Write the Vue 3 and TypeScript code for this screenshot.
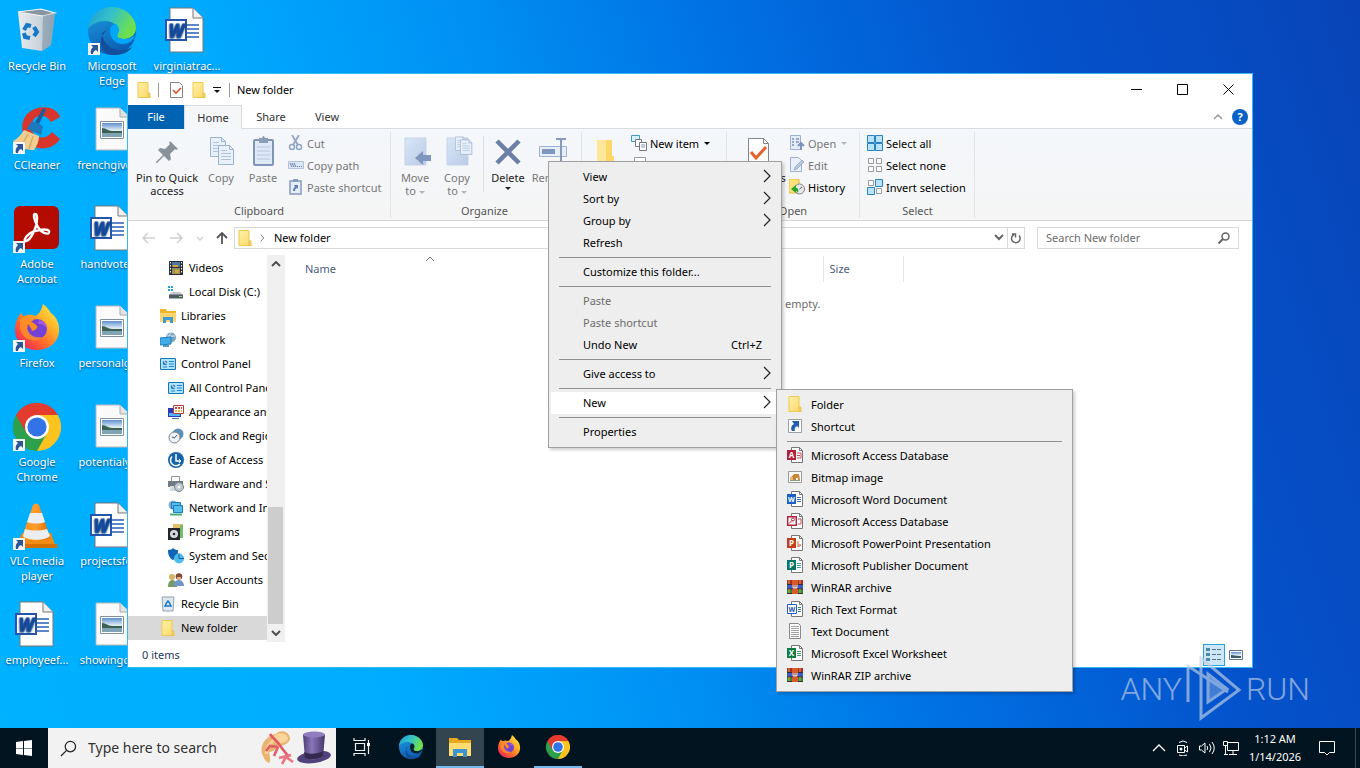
<script setup lang="ts">
interface Shortcut { label: string; icon: string; linked?: boolean }
interface TreeNode { label: string; icon: string; depth: number; selected?: boolean }
interface MenuEntry { label?: string; icon?: string; keys?: string; arrow?: boolean; off?: boolean; open?: boolean; line?: boolean }
interface SmallAction { label: string; icon: string; off?: boolean; caret?: boolean }

const shortcuts: Shortcut[] = [
  { label: 'Recycle Bin', icon: 'bin' },
  { label: 'CCleaner', icon: 'ccleaner', linked: true },
  { label: 'Adobe Acrobat', icon: 'acrobat', linked: true },
  { label: 'Firefox', icon: 'firefox', linked: true },
  { label: 'Google Chrome', icon: 'chrome', linked: true },
  { label: 'VLC media player', icon: 'vlc', linked: true },
  { label: 'employeef...', icon: 'worddoc' },
  { label: 'Microsoft Edge', icon: 'edge', linked: true },
  { label: 'frenchgivea...', icon: 'picfile' },
  { label: 'handvotes...', icon: 'worddoc' },
  { label: 'personalga...', icon: 'picfile' },
  { label: 'potentialye...', icon: 'picfile' },
  { label: 'projectsfor...', icon: 'worddoc' },
  { label: 'showingco...', icon: 'picfile' },
  { label: 'virginiatrac...', icon: 'worddoc' },
]

const tree: TreeNode[] = [
  { label: 'Videos', icon: 'videos', depth: 1 },
  { label: 'Local Disk (C:)', icon: 'disk', depth: 1 },
  { label: 'Libraries', icon: 'libraries', depth: 0 },
  { label: 'Network', icon: 'network', depth: 0 },
  { label: 'Control Panel', icon: 'cpanel', depth: 0 },
  { label: 'All Control Panel Items', icon: 'cpanel', depth: 1 },
  { label: 'Appearance and Personalization', icon: 'appearance', depth: 1 },
  { label: 'Clock and Region', icon: 'clock', depth: 1 },
  { label: 'Ease of Access', icon: 'ease', depth: 1 },
  { label: 'Hardware and Sound', icon: 'hardware', depth: 1 },
  { label: 'Network and Internet', icon: 'netinet', depth: 1 },
  { label: 'Programs', icon: 'programs', depth: 1 },
  { label: 'System and Security', icon: 'security', depth: 1 },
  { label: 'User Accounts', icon: 'users', depth: 1 },
  { label: 'Recycle Bin', icon: 'binsmall', depth: 0 },
  { label: 'New folder', icon: 'folder', depth: 0, selected: true },
]

const clipboardActions: SmallAction[] = [
  { label: 'Cut', icon: 'cut', off: true },
  { label: 'Copy path', icon: 'copypath', off: true },
  { label: 'Paste shortcut', icon: 'pasteshort', off: true },
]
const newActions: SmallAction[] = [
  { label: 'New item', icon: 'newitem', caret: true },
  { label: 'Easy access', icon: 'easyaccess', caret: true },
]
const openActions: SmallAction[] = [
  { label: 'Open', icon: 'open', off: true, caret: true },
  { label: 'Edit', icon: 'edit', off: true },
  { label: 'History', icon: 'history' },
]
const selectActions: SmallAction[] = [
  { label: 'Select all', icon: 'selall' },
  { label: 'Select none', icon: 'selnone' },
  { label: 'Invert selection', icon: 'selinv' },
]

const menu: MenuEntry[] = [
  { label: 'View', arrow: true },
  { label: 'Sort by', arrow: true },
  { label: 'Group by', arrow: true },
  { label: 'Refresh' },
  { line: true },
  { label: 'Customize this folder...' },
  { line: true },
  { label: 'Paste', off: true },
  { label: 'Paste shortcut', off: true },
  { label: 'Undo New', keys: 'Ctrl+Z' },
  { line: true },
  { label: 'Give access to', arrow: true },
  { line: true },
  { label: 'New', arrow: true, open: true },
  { line: true },
  { label: 'Properties' },
]

const submenu: MenuEntry[] = [
  { label: 'Folder', icon: 'folder' },
  { label: 'Shortcut', icon: 'shortcut' },
  { line: true },
  { label: 'Microsoft Access Database', icon: 'access' },
  { label: 'Bitmap image', icon: 'bitmap' },
  { label: 'Microsoft Word Document', icon: 'word' },
  { label: 'Microsoft Access Database', icon: 'accessold' },
  { label: 'Microsoft PowerPoint Presentation', icon: 'ppt' },
  { label: 'Microsoft Publisher Document', icon: 'publisher' },
  { label: 'WinRAR archive', icon: 'rar' },
  { label: 'Rich Text Format', icon: 'rtf' },
  { label: 'Text Document', icon: 'txt' },
  { label: 'Microsoft Excel Worksheet', icon: 'excel' },
  { label: 'WinRAR ZIP archive', icon: 'rar' },
]
</script>

<template>
  <svg class="sprite" aria-hidden="true">
    <defs>
      <linearGradient id="gFolder" x1="0" y1="0" x2="1" y2="1"><stop offset="0" stop-color="#fff0a8" /><stop offset="1" stop-color="#fbd868" /></linearGradient>
      <linearGradient id="gEdgeTop" x1="0" y1="0" x2="1" y2="0.4"><stop offset="0" stop-color="#1a9ad6" /><stop offset=".5" stop-color="#35c1c9" /><stop offset="1" stop-color="#6fe04b" /></linearGradient>
      <linearGradient id="gEdgeSide" x1="0" y1="0" x2="0.4" y2="1"><stop offset="0" stop-color="#1b9de2" /><stop offset="1" stop-color="#0f5fb4" /></linearGradient>
      <linearGradient id="gFox" x1="1" y1="0" x2="0.1" y2="1"><stop offset="0" stop-color="#fff44f" /><stop offset=".35" stop-color="#ffb62a" /><stop offset=".65" stop-color="#ff6a2b" /><stop offset="1" stop-color="#ef1763" /></linearGradient>
      <linearGradient id="gSea" x1="0" y1="0" x2="0" y2="1"><stop offset="0" stop-color="#5d8fd0" /><stop offset=".5" stop-color="#dcebf2" /><stop offset="1" stop-color="#dcebf2" /></linearGradient>
      <linearGradient id="gBin" x1="0" y1="0" x2="1" y2="0"><stop offset="0" stop-color="#e8ecef" /><stop offset=".6" stop-color="#c9d3da" /><stop offset="1" stop-color="#8fa9bb" /></linearGradient>
      <linearGradient id="gCone" x1="0" y1="0" x2="1" y2="0"><stop offset="0" stop-color="#f7941e" /><stop offset=".5" stop-color="#ff9d2a" /><stop offset="1" stop-color="#d96a00" /></linearGradient>
      <linearGradient id="gHat" x1="0" y1="0" x2="1" y2="0"><stop offset="0" stop-color="#4d3f75" /><stop offset=".4" stop-color="#8977b8" /><stop offset="1" stop-color="#43366a" /></linearGradient>
      <linearGradient id="gPane" x1="0" y1="0" x2="1" y2="1"><stop offset="0" stop-color="#d9e6f7" /><stop offset="1" stop-color="#b9cbe6" /></linearGradient>
    </defs>

    <symbol id="bin" viewBox="0 0 48 48">
      <path d="M5 5 28 2 42 6 38 38 29 44 9 41Z" fill="url(#gBin)" />
      <path d="M5 5 28 2 42 6 30 9Z" fill="#8796a0" stroke="#f3f6f8" stroke-width="1.2" />
      <path d="M30 9 42 6 38 38 29 44Z" fill="#8ba0ae" opacity=".7" />
      <g fill="none" stroke="#1577c8" stroke-width="4"><path d="m11 23 3-5 4 1" /><path d="m21 20 3 5-3 4" /><path d="m17 31-5-1-1-4" /></g>
    </symbol>
    <symbol id="arrowbadge" viewBox="0 0 12 12">
      <path d="M0 0h12v12H0z" fill="#f4f6f9" /><path d="M3 2h7v7L8 7C6 8 5 9 5 11H3C2 8 3 6 5 4Z" fill="#2b5797" />
    </symbol>
    <symbol id="ccleaner" viewBox="0 0 48 48">
      <path d="M47 11C43 0 27-1 18 5 6 12 7 30 17 38c8 7 23 6 30-5l-8-7c-5 7-14 7-18 2-4-5-3-12 1-16 5-4 12-3 16 4Z" fill="#d9362b" />
      <path d="m30 2 3 2-9 18-4-2Z" fill="#1e5b9d" /><path d="m18 16c3-1 9 1 12 5l-2 8-14-6Z" fill="#1d79bd" />
      <path d="m11 24 15 6c0 5-2 10-5 14-8 0-15-2-21-9 4-2 8-6 11-11Z" fill="#f0cd91" /><path d="m15 28-6 11m11-9-4 13" stroke="#d6a75d" stroke-width="1.3" />
    </symbol>
    <symbol id="acrobat" viewBox="0 0 48 48">
      <rect x="1" y="1" width="45" height="43" rx="6" fill="#b30b00" />
      <path d="M22 9c-3 0 1 12 6 17 5 4 9 3 8 0-2-3-16-1-21 4-4 3-4 7-2 6 5-1 11-14 11-22 0-3 0-5-2-5Z" fill="none" stroke="#fff" stroke-width="2.400" />
    </symbol>
    <symbol id="firefox" viewBox="0 0 48 48">
      <path d="M30 0c4 3 6 6 8 9 6 4 9 12 8 19-1 11-11 18-22 18C12 46 2 38 2 26c0-8 3-13 6-17 1 2 2 3 4 3 4-2 8-1 10 0 3-1 6-4 8-12Z" fill="url(#gFox)" />
      <circle cx="24" cy="25" r="10" fill="#7440d6" /><path d="M13 17c3-1 7 1 10 4 3 1 1 5-4 6-1-4-4-6-6-10Z" fill="#ff8a1d" /><path d="M7 13c5 1 9-2 14 3l-7 4c-1 8 5 15 15 13-7 7-20 3-22-9Z" fill="#ff9228" opacity=".8" /><path d="M26 16c5 1 8 5 8 9-2-4-5-5-9-5Z" fill="#a857e4" />
    </symbol>
    <symbol id="chrome" viewBox="0 0 48 48">
      <path d="M24 24 3.200 12A24 24 0 0 1 44.800 12Z" fill="#e33b2e" /><path d="M24 24 44.800 12A24 24 0 0 1 24 48Z" fill="#fcc31e" /><path d="M24 24 24 48A24 24 0 0 1 3.200 12Z" fill="#2da04c" />
      <path d="M24 12h20.800L34 30Z" fill="#fcc31e" /><path d="M13.600 30 3.200 12 24 13Z" fill="#e33b2e" /><path d="m34 30-10 18-10-18Z" fill="#2da04c" />
      <path d="M3.200 12 13.600 30 24 12h20.800A24 24 0 0 0 3.200 12Z" fill="#e33b2e" />
      <circle cx="24" cy="24" r="12" fill="#fff" /><circle cx="24" cy="24" r="9.600" fill="#3274e8" />
    </symbol>
    <symbol id="edge" viewBox="0 0 48 48">
      <circle cx="24" cy="24" r="24" fill="url(#gEdgeSide)" />
      <path d="M0 22C1 8 12 0 24 0c14 0 24 11 24 21 0 7-6 11-12 11-7 0-8-3-6-6 2-4-2-12-13-12C9 14 1 19 0 22Z" fill="url(#gEdgeTop)" />
      <path d="M14 26c1 12 11 18 21 17 4 0 8-2 10-4-4 7-15 11-25 8-9-5-11-18 2-26Z" fill="#124e9c" />
      <path d="M30 26c-2 3-1 6 6 6 4 0 8-1 11-4-1 4-5 9-12 9-9 0-13-7-13-13 0-5 3-7 6-7 3 3 4 6 2 9Z" fill="#00a6fa" />
    </symbol>
    <symbol id="edgebar" viewBox="0 0 48 48">
      <circle cx="24" cy="24" r="24" fill="url(#gEdgeSide)" />
      <path d="M0 22C1 8 12 0 24 0c14 0 24 11 24 21 0 7-6 11-12 11-7 0-8-3-6-6 2-4-2-12-13-12C9 14 1 19 0 22Z" fill="url(#gEdgeTop)" />
      <path d="M14 26c1 12 11 18 21 17 4 0 8-2 10-4-4 7-15 11-25 8-9-5-11-18 2-26Z" fill="#124e9c" />
      <path d="M30 26c-2 3-1 6 6 6 4 0 8-1 11-4-1 4-5 9-12 9-9 0-13-7-13-13 0-5 3-7 6-7 3 3 4 6 2 9Z" fill="#06202e" />
    </symbol>
    <symbol id="vlc" viewBox="0 0 48 48">
      <path d="m9 31-6 15h40l-5-15Z" fill="#f28a13" /><path d="M8 42h36v4H3Z" fill="#d66f06" />
      <path d="M20 3q3-3 6 0l11 32c-3 5-24 5-28 0Z" fill="url(#gCone)" /><path d="m17 11 12 0 3 9c-5 2-13 2-18 0ZM12 27c7 2 15 2 22 0l3 7c-5 5-22 5-27 0Z" fill="#eceff1" />
    </symbol>
    <symbol id="worddoc" viewBox="5 0 48 48">
      <path d="M12 1h23l10 10v34H12Z" fill="#fff" stroke="#777" /><path d="M35 1v10h10" fill="#f0f0f0" stroke="#777" />
      <path d="M26 18h15M26 22h15M26 26h15M26 30h15" stroke="#2b5fb4" stroke-width="1.400" />
      <path d="M7 12h22v22H7z" fill="#2456ad" /><path d="M9 14h18v18H9z" fill="#fff" /><text x="18" y="29.500" font-size="17" font-weight="700" font-style="italic" text-anchor="middle" fill="#1d4fa8" stroke="#1d4fa8" font-family="Noto Sans">W</text>
    </symbol>
    <symbol id="picfile" viewBox="0 0 48 48">
      <path d="M8 2h24l10 10v32H8Z" fill="#fafafa" stroke="#b8b8b8" /><path d="M32 2v9h10" fill="#e3e3e3" stroke="#aaa" />
      <path d="M12.500 15.500h23v17h-23z" fill="#fff" stroke="#7f8f9e" /><path d="M14 17h20v14H14z" fill="url(#gSea)" />
      <path d="M14 22c4 0 6 3 10 3h10v3H14Z" fill="#3c6153" /><path d="M14 27h20v4H14z" fill="#7fa5b5" />
    </symbol>

    <symbol id="folder" viewBox="0 0 16 16"><path d="M2 .5h10v12.500l2 .5v2H2Z" fill="url(#gFolder)" stroke="#eec850" /><path d="M12 11h2v4.500h-2z" fill="#f7d262" stroke="#e3b93f" stroke-width=".6" /></symbol>
    <symbol id="shortcut" viewBox="0 0 16 16"><path d="M1.500 1.500h13v13h-13z" fill="#fff" stroke="#9aa0a8" /><path d="M5 3h7v7l-2-2c-2 1-3 3-2 5H5c-2-3 0-6 2-7Z" fill="#2260ae" /></symbol>
    <symbol id="sheet" viewBox="0 0 16 16"><path d="M4.500.5h8l3 3v12h-11z" fill="#fff" stroke="#777" /><path d="M12.500.5v3h3" fill="none" stroke="#777" /></symbol>
    <symbol id="access" viewBox="0 0 16 16"><use href="#sheet" /><path d="M0 3h9v10H0z" fill="#b1203a" /><path d="M10 6h4v5h-4M10 8.500h3" fill="none" stroke="#c94a5c" /><text x="4.500" y="11" font-size="8" font-weight="700" text-anchor="middle" fill="#fff" font-family="Open Sans">A</text></symbol>
    <symbol id="accessold" viewBox="0 0 16 16"><use href="#sheet" /><path d="M.7 3.700h8.600v8.600H.700z" fill="#fff" stroke="#b1203a" stroke-width="1.400" /><path d="M11 6h3v5h-3" fill="none" stroke="#c94a5c" /><circle cx="6" cy="6.500" r="1.500" fill="none" stroke="#b1203a" /><path d="m5 7.500-3 3" stroke="#b1203a" /></symbol>
    <symbol id="word" viewBox="0 0 16 16"><use href="#sheet" /><path d="M0 3h9v10H0z" fill="#1d5fc4" /><path d="M10 6.500h4m-4 2h4m-4 2h4" stroke="#3f6fb8" /><text x="4.500" y="11" font-size="7" font-weight="700" text-anchor="middle" fill="#fff" font-family="Open Sans">W</text></symbol>
    <symbol id="rtf" viewBox="0 0 16 16"><use href="#sheet" /><path d="M.5 3.500h9v9h-9z" fill="#fff" stroke="#1d5fc4" /><path d="M11 6.500h3m-3 2h3m-3 2h3" stroke="#3f6fb8" /><text x="5" y="10.800" font-size="7" font-weight="700" text-anchor="middle" fill="#1d4fa8" font-family="Open Sans">W</text></symbol>
    <symbol id="ppt" viewBox="0 0 16 16"><use href="#sheet" /><path d="M0 3h9v10H0z" fill="#c43e1c" /><path d="M11 6v4h3A3 3 0 0 1 10 11" fill="none" stroke="#d9603f" /><text x="4.500" y="11" font-size="8" font-weight="700" text-anchor="middle" fill="#fff" font-family="Open Sans">P</text></symbol>
    <symbol id="publisher" viewBox="0 0 16 16"><use href="#sheet" /><path d="M0 3h9v10H0z" fill="#077568" /><path d="M10 6.500h4m-4 2h4m-4 2h4" stroke="#3fa097" /><text x="4.500" y="11" font-size="8" font-weight="700" text-anchor="middle" fill="#fff" font-family="Open Sans">P</text></symbol>
    <symbol id="excel" viewBox="0 0 16 16"><use href="#sheet" /><path d="M0 3h9v10H0z" fill="#107c41" /><path d="M10 6.500h4m-4 2h4m-4 2h4" stroke="#3a9b65" /><text x="4.500" y="11" font-size="8" font-weight="700" text-anchor="middle" fill="#fff" font-family="Open Sans">X</text></symbol>
    <symbol id="bitmap" viewBox="0 0 16 16"><path d="M1.500 2.500h13v11h-13z" fill="#fff" stroke="#9a9a9a" /><path d="M4 11V8l3-3h5l1 6h-2V9H9v2Z" fill="#c9853b" /><path d="M3 8h3v3H3z" fill="#e8b878" /><path d="M3 11h10v1H3z" fill="#8a9f7b" /></symbol>
    <symbol id="rar" viewBox="0 0 16 16"><path d="M0 1h16v5H0z" fill="#a4302c" /><path d="M0 6h16v4H0z" fill="#3d5bc4" /><path d="M0 10h16v4H0z" fill="#2f8a36" /><path d="M0 5.500h16M0 10h16M0 14.500h16" stroke="#392c3a" /><path d="M5 1h6v14H5z" fill="#d85a2a" /><path d="M5 6h6v4H5z" fill="#7a2433" /><path d="M6 6v3h4V6M8 6v3" fill="none" stroke="#fff" /><path d="M2 1v4M13 1v4M2 10v4M13 10v4" stroke="#e5a43a" /></symbol>
    <symbol id="txt" viewBox="0 0 16 16"><path d="M2.500.5h9l2 2v13h-11z" fill="#fdfdfd" stroke="#8a8a8a" /><path d="M4 3.500h8M4 5.500h8M4 7.500h8M4 9.500h8M4 11.500h8M4 13.500h8" stroke="#a2a2a2" /></symbol>

    <symbol id="videos" viewBox="0 0 16 16"><path d="M1 1h14v14H1z" fill="#2b2f3a" /><path d="M4 2h8v5H4z" fill="#4c78a8" /><path d="M4 8h8v6H4z" fill="#97905a" /><path d="M5 5h5v2H5zM7 10h4v3H7z" fill="#d7a53b" /><path d="M2.500 2v12M13.500 2v12" stroke="#fff" stroke-dasharray="1.500 1.500" /></symbol>
    <symbol id="disk" viewBox="0 0 16 16"><path d="M0 2h2v2H0zM3 2h2v2H3zM0 5h2v2H0zM3 5h2v2H3z" fill="#28a5dc" /><path d="M4 8h8l3 3H1Z" fill="#c2c8cc" /><path d="M1 10.500h14v4H1z" fill="#535b62" /><path d="M11 12.500h3" stroke="#7cf07c" /></symbol>
    <symbol id="libraries" viewBox="0 0 16 16"><path d="M0 1h6l1 2h9v11H0Z" fill="#f0b52a" /><path d="M0 5h16v9H0z" fill="#fad571" /><path d="M3 15V9h10v6h-3v-3H6v3Z" fill="#3f9ad2" /></symbol>
    <symbol id="network" viewBox="0 0 16 16"><circle cx="11" cy="5.500" r="5" fill="#7da4bf" /><path d="M11 1c-3 3-3 7 0 9m-4-6h8" stroke="#dcebf4" fill="none" /><path d="m0 6 11-1v7l-11 1Z" fill="#42ade8" stroke="#1b7dbb" /><path d="M3 14h6" stroke="#2177ab" stroke-width="1.500" /></symbol>
    <symbol id="cpanel" viewBox="0 0 16 16"><path d="M.5 2.500h15v11H.5z" fill="#aee0fa" stroke="#1874b8" /><circle cx="5" cy="7" r="2.300" fill="#1b84cc" /><path d="M5 4.500V7h2.500" stroke="#fff" /><path d="M9 5.500h5M9 8h5M9 10.500h5M3 11h4" stroke="#2088cf" /></symbol>
    <symbol id="appearance" viewBox="0 0 16 16"><path d="M0 4h13v9H0z" fill="#2b38ba" /><path d="M1 9h11v3H1z" fill="#54b5f2" /><path d="M5.500 1.500h10v8h-10z" fill="#fff" stroke="#bd3b36" /><path d="M7 4h2m1 0h2m1 0h1" stroke="#d94a3a" stroke-width="2" /><path d="M7 7h2m1 0h2m1 0h1" stroke="#e4b83b" stroke-width="2" /><path d="M4 14.500h7" stroke="#367ead" /></symbol>
    <symbol id="clock" viewBox="0 0 16 16"><circle cx="10" cy="6" r="5.500" fill="#5b93b8" /><circle cx="6.500" cy="9.500" r="5.500" fill="#eef2f4" stroke="#77858f" /><path d="m6.500 10 2.500-3M6.500 10 4 9" stroke="#48535b" /></symbol>
    <symbol id="ease" viewBox="0 0 16 16"><circle cx="8" cy="8" r="8" fill="#1464ac" /><path d="M4 4.500A5 5 0 0 0 12 12M8 2v7h5" fill="none" stroke="#fff" stroke-width="1.500" /><path d="m11 7 2 2-2 2" fill="none" stroke="#fff" /></symbol>
    <symbol id="hardware" viewBox="0 0 16 16"><path d="M3.500.5h8v5h-8z" fill="#fff" stroke="#8b959c" /><path d="M0 5h15v6H0z" fill="#6f7a82" /><path d="M2 10h9v5H2z" fill="#d3dade" /><circle cx="11" cy="11" r="4.500" fill="#bec7cc" stroke="#7a848b" /><circle cx="11" cy="11" r="1.500" fill="#fff" /></symbol>
    <symbol id="netinet" viewBox="0 0 16 16"><circle cx="5" cy="5" r="4.500" fill="#82b3cb" /><path d="M3.500 2.500h9v6h-9z" fill="#54bdf0" stroke="#1b7dbb" /><path d="M5.500 5.500h9v7h-9z" fill="#54bdf0" stroke="#1b7dbb" /><path d="M2 14.500h12" stroke="#43b077" stroke-width="2" /></symbol>
    <symbol id="programs" viewBox="0 0 16 16"><path d="M5 0h10v12H5z" fill="#e8c067" /><path d="M12 1h3v13h-3z" fill="#6fbf6a" /><path d="M0 4h12v12H0z" fill="#23262a" /><circle cx="6" cy="10" r="4" fill="#d5dadd" /><circle cx="6" cy="10" r="1.300" fill="#23262a" /></symbol>
    <symbol id="security" viewBox="0 0 16 16"><path d="M0 2c3 0 4-1 5-2 2 2 4 2 5 2 0 5-1 8-5 10C1 10 0 6 0 2Z" fill="#1264b4" /><circle cx="11" cy="10.500" r="5" fill="#4dbcf2" /><path d="M11 5.500v5h5" fill="none" stroke="#125e9e" /></symbol>
    <symbol id="users" viewBox="0 0 16 16"><circle cx="4" cy="5" r="3" fill="#d6b35c" /><path d="M0 15c0-5 2-7 4.500-7S9 11 9 15Z" fill="#769b63" /><circle cx="11" cy="4.500" r="3.300" fill="#7d4b35" /><path d="M9 5h4v3H9z" fill="#deb08c" /><path d="M6 14c0-4 2-6 5-6s5 3 5 6Z" fill="#6e96c8" /></symbol>
    <symbol id="binsmall" viewBox="0 0 16 16"><path d="M2 1h12l-1 14H3Z" fill="#dfe9ef" stroke="#8fa4b3" /><path d="m5 10 1.500-3L8 5l1.500 2L11 10Z" fill="none" stroke="#1878c6" stroke-width="1.500" /></symbol>

    <symbol id="pin" viewBox="0 0 24 24"><path d="m15 1 8 8-2 1-1-1-5 5 1 5-2 2-5-5-7 7-1 0 0-1 7-7-5-5 2-2 5 1 5-5-1-1Z" fill="#8a9299" /></symbol>
    <symbol id="page" viewBox="0 0 17 21"><path d="M.5.5h11l4 4v15H.5Z" fill="#e8f0fa" stroke="#9db1d1" /><path d="M11.500.5v4h4" fill="none" stroke="#9db1d1" /><path d="M3 5.500h6M3 8.500h10M3 11.500h10M3 14.500h10" stroke="#b0c2dd" /></symbol>
    <symbol id="copy" viewBox="0 0 32 32"><use href="#page" x="5" y="1" width="17" height="21" /><use href="#page" x="13" y="9" width="17" height="21" /></symbol>
    <symbol id="paste" viewBox="0 0 32 32"><rect x="7" y="4" width="19" height="25" rx="1" fill="#dfe9f6" stroke="#8095ba" stroke-width="2" /><path d="M12 2h3l1-2h1l1 2h3v5h-9z" fill="#8d9cb5" /><path d="M10 11h13M10 15h13M10 19h13M10 23h13" stroke="#b7c6dc" /></symbol>
    <symbol id="moveto" viewBox="0 0 32 32"><path d="M6 2h21v27H6z" fill="url(#gPane)" stroke="#c5d3e9" /><path d="m16 22 8-7v4h8v6h-8v4Z" fill="#7f97bf" /></symbol>
    <symbol id="copyto" viewBox="0 0 32 32"><path d="M6 2h21v27H6z" fill="url(#gPane)" stroke="#c5d3e9" /><use href="#page" x="14" y="0" width="12" height="16" /><use href="#page" x="19" y="3" width="13" height="17" /></symbol>
    <symbol id="delete" viewBox="0 0 32 32"><path d="m5 5 22 22M27 5 5 27" stroke="#6c7fa6" stroke-width="4.500" /></symbol>
    <symbol id="rename" viewBox="0 0 32 32"><path d="M2.500 10.500h27v10h-27z" fill="#e7effa" stroke="#9db1d1" /><path d="M5 13h13v5H5z" fill="#7f97bf" /><path d="M19 3h4l1 1 1-1h4M24 4v22" fill="none" stroke="#8599bd" stroke-width="2" /></symbol>
    <symbol id="newfolder" viewBox="0 0 32 32"><path d="M7 4h15v16h2v11H7Z" fill="#ffd766" /><path d="M7 4h9v26H7z" fill="#ffe79a" /></symbol>
    <symbol id="props" viewBox="0 0 32 32"><path d="M5.500 2.500h15l5 5V30h-20Z" fill="#fff" stroke="#858585" /><path d="M20.500 2.500v5h5" fill="none" stroke="#858585" /><path d="m8 16 5 6 10-11" fill="none" stroke="#e8602c" stroke-width="3" /></symbol>
    <symbol id="cut" viewBox="0 0 16 16"><path d="m4 0 6 10M11 0 5 10" stroke="#9aaac4" stroke-width="2" /><circle cx="4" cy="12" r="2.500" fill="none" stroke="#8fa3c6" stroke-width="1.500" /><circle cx="11" cy="12" r="2.500" fill="none" stroke="#8fa3c6" stroke-width="1.500" /></symbol>
    <symbol id="copypath" viewBox="0 0 16 16"><path d="M.5 4.500h15v7H.5z" fill="#dce6f4" stroke="#b3c3dc" /><path d="m2 6 2 4m0-4 2 4m0-4 2 4m1-.5h1m1 0h1m1 0h1" stroke="#6d84ad" /></symbol>
    <symbol id="pasteshort" viewBox="0 0 16 16"><path d="M2 2h11v13H2z" fill="#e5edf8" stroke="#8299c1" stroke-width="1.500" /><path d="M5 0h5v3H5z" fill="#8d9cb5" /><path d="M6 6h4v4L9 9c-1 0-2 1-2 3H5c0-2 1-4 2-4Z" fill="#5f7db0" /></symbol>
    <symbol id="newitem" viewBox="0 0 16 16"><path d="M.5.500h8v6h-8z" fill="#d9f1fd" stroke="#4297c4" /><path d="M4.500 4.500h6v7h-6z" fill="#fff" stroke="#777" /><path d="M8.500 7.500h7v8h-7z" fill="#fff" stroke="#777" /><path d="M10 10h4m-4 2h4" stroke="#8097b8" /></symbol>
    <symbol id="easyaccess" viewBox="0 0 16 16"><path d="M3.500.5h11v4h-11z" fill="#fff" stroke="#999" /><path d="M3 7h10v7H3z" fill="#c9daf0" /></symbol>
    <symbol id="open" viewBox="0 0 16 16"><path d="M1.500.5h10v14h-10z" fill="#e4ecf7" stroke="#9db1d1" /><path d="M3 4h2M3 7h2M3 10h2M7 4h3M7 7h3" stroke="#7a92bd" stroke-width="1.500" /><path d="m9 11 3-3 3 3m-3-2v6" fill="none" stroke="#7f93bb" stroke-width="2" /></symbol>
    <symbol id="edit" viewBox="0 0 16 16"><path d="M1.500.5h8l3 3v11h-11z" fill="#e9f0fa" stroke="#9db1d1" /><path d="m5 13 1-3 7-7 2 2-7 7Z" fill="#b7c7df" stroke="#8da2c5" stroke-width=".7" /></symbol>
    <symbol id="history" viewBox="0 0 16 16"><path d="M0 0h10v14H0z" fill="#ffe17a" stroke="#e6bd45" /><circle cx="10.500" cy="10" r="5" fill="#e8e8ec" stroke="#81828c" /><path d="m10.500 10 2.500-2" stroke="#555" /><path d="m2 10 5-4v3c2 0 3 2 2 5-1-2-2-2-2-2v2Z" fill="#29a329" /></symbol>
    <symbol id="selall" viewBox="0 0 16 16"><path d="M.5.500h7v7h-7zM8.500.500h7v7h-7zM.5 8.500h7v7h-7zM8.500 8.500h7v7h-7z" fill="#b9e3fb" stroke="#2b82c0" /></symbol>
    <symbol id="selnone" viewBox="0 0 16 16"><path d="M1.500 1.500h5v5h-5zM9.500 1.500h5v5h-5zM1.500 9.500h5v5h-5zM9.500 9.500h5v5h-5z" fill="#fff" stroke="#9a9a9a" /></symbol>
    <symbol id="selinv" viewBox="0 0 16 16"><path d="M1.500 1.500h5v5h-5zM9.500 9.500h5v5h-5z" fill="#fff" stroke="#9a9a9a" /><path d="M8.500.500h7v7h-7zM.5 8.500h7v7h-7z" fill="#b9e3fb" stroke="#2b82c0" /></symbol>
    <symbol id="propsmall" viewBox="0 0 16 16"><path d="M1.500.5h9l3 3v12h-12z" fill="#fff" stroke="#858585" /><path d="m4 8 3 3 5-5" fill="none" stroke="#d9532c" stroke-width="1.600" /></symbol>
    <symbol id="chev" viewBox="0 0 9 14"><path d="m1 1 6 6-6 6" fill="none" stroke="currentColor" stroke-width="1.200" /></symbol>
    <symbol id="explorer" viewBox="0 0 24 24"><path d="M1 3h8l2 2h12v16H1Z" fill="#e8a820" /><path d="M1 8h22v13H1z" fill="#ffdc70" /><path d="M5 22v-8h14v8h-4v-4H9v4Z" fill="#3c93d2" /></symbol>
    <symbol id="hats" viewBox="0 0 72 36">
      <path d="M3 26C-2 17 6 5 16 4c4-5 13-3 14 4 0 5-6 7-11 9-5 4-8 5-10 5 1 5 2 9 0 11-3-1-4-3-6-7Z" fill="#e9b46f" /><path d="M14 6c5-5 14-3 14 3-3 5-10 6-13 2Z" fill="#f9d49b" /><path d="M6 24c1-8 7-15 13-17" fill="none" stroke="#f8d398" stroke-width="3" />
      <path d="M10 4c3 5 9 8 11 13l8 10M18 17l-8-1-4 5m12-4-4 9" fill="none" stroke="#e25b69" stroke-width="2.600" /><path d="m26 27-4 7m4-7 7 5m-14-4 12-3" stroke="#ef7381" stroke-width="2.600" />
      <ellipse cx="54" cy="27" rx="17" ry="6" fill="#51427c" transform="rotate(-8 54 27)" /><path d="M43 5c4-4 19-4 22 0l-2 22c-5 3-14 3-18 1Z" fill="url(#gHat)" /><ellipse cx="54" cy="4.500" rx="11" ry="3" fill="#8f7dbf" /><path d="M44 22c5 3 14 2 19-1v5c-5 4-14 4-18 2Z" fill="#35294f" />
    </symbol>
  </svg>

  <div class="desktop">
    <ul class="shortcuts">
      <li v-for="s in shortcuts" :key="s.label">
        <a href="#" class="shortcut">
          <span class="art">
            <svg class="art-main"><use :href="'#' + s.icon" /></svg>
            <svg v-if="s.linked" class="art-badge"><use href="#arrowbadge" /></svg>
          </span>
          <span class="caption">{{ s.label }}</span>
        </a>
      </li>
    </ul>

    <section class="window" aria-label="New folder">
      <header class="titlebar">
        <svg class="i16"><use href="#folder" /></svg>
        <span class="tick"></span>
        <button class="quick" aria-label="Properties"><svg class="i16"><use href="#propsmall" /></svg></button>
        <button class="quick" aria-label="New folder"><svg class="i16"><use href="#folder" /></svg></button>
        <button class="quick narrow" aria-label="Customize Quick Access Toolbar"><svg class="qcaret" viewBox="0 0 8 8"><path d="M0 1.500h8" stroke="#111" /><path d="M1 4h6L4 7Z" fill="#111" /></svg></button>
        <span class="tick second"></span>
        <h1>New folder</h1>
        <div class="controls">
          <button aria-label="Minimize"><svg viewBox="0 0 11 11"><path d="M0 5.500h11" stroke="#000" /></svg></button>
          <button aria-label="Maximize"><svg viewBox="0 0 11 11"><path d="M.5.5h10v10H.5z" fill="none" stroke="#000" /></svg></button>
          <button aria-label="Close"><svg viewBox="0 0 11 11"><path d="m.5.5 10 10m0-10-10 10" stroke="#000" /></svg></button>
        </div>
      </header>

      <nav class="tabs">
        <button class="tab file">File</button>
        <button class="tab active">Home</button>
        <button class="tab">Share</button>
        <button class="tab">View</button>
        <span class="grow"></span>
        <button class="mini" aria-label="Minimize the Ribbon"><svg viewBox="0 0 10 6"><path d="m1 5 4-4 4 4" fill="none" stroke="#999" stroke-width="1.500" /></svg></button>
        <button class="help" aria-label="Help">?</button>
      </nav>

      <div class="ribbon">
        <section class="group clip">
          <div class="tools">
            <button class="big pin"><svg><use href="#pin" x="4" y="4" width="24" height="24" /></svg><span>Pin to Quick access</span></button>
            <button class="big off copy"><svg><use href="#copy" /></svg><span>Copy</span></button>
            <button class="big off paste"><svg><use href="#paste" /></svg><span>Paste</span></button>
            <div class="stack">
              <button v-for="a in clipboardActions" :key="a.label" class="small" :class="{ off: a.off }"><svg class="i16"><use :href="'#' + a.icon" /></svg>{{ a.label }}</button>
            </div>
          </div>
          <h2>Clipboard</h2>
        </section>
        <section class="group organize">
          <div class="tools">
            <button class="big off move"><svg><use href="#moveto" /></svg><span>Move to <i class="down"></i></span></button>
            <button class="big off move"><svg><use href="#copyto" /></svg><span>Copy to <i class="down"></i></span></button>
            <span class="split"></span>
            <button class="big del"><svg><use href="#delete" /></svg><span>Delete</span><i class="down"></i></button>
            <button class="big off ren"><svg><use href="#rename" /></svg><span>Rename</span></button>
          </div>
          <h2>Organize</h2>
        </section>
        <section class="group create">
          <div class="tools">
            <button class="big del"><svg><use href="#newfolder" /></svg><span>New folder</span></button>
            <div class="stack">
              <button v-for="a in newActions" :key="a.label" class="small"><svg class="i16"><use :href="'#' + a.icon" /></svg>{{ a.label }}<i class="down"></i></button>
            </div>
          </div>
          <h2>New</h2>
        </section>
        <section class="group opening">
          <div class="tools">
            <button class="big prop"><svg><use href="#props" /></svg><span>Properties</span></button>
            <div class="stack">
              <button v-for="a in openActions" :key="a.label" class="small" :class="{ off: a.off }"><svg class="i16"><use :href="'#' + a.icon" /></svg>{{ a.label }}<i v-if="a.caret" class="down"></i></button>
            </div>
          </div>
          <h2>Open</h2>
        </section>
        <section class="group select">
          <div class="tools">
            <div class="stack">
              <button v-for="a in selectActions" :key="a.label" class="small"><svg class="i16"><use :href="'#' + a.icon" /></svg>{{ a.label }}</button>
            </div>
          </div>
          <h2>Select</h2>
        </section>
      </div>

      <div class="address">
        <button class="nav" aria-label="Back"><svg viewBox="0 0 14 12"><path d="M14 6H2m5-5L2 6l5 5" fill="none" stroke="#cfcfcf" stroke-width="1.500" /></svg></button>
        <button class="nav" aria-label="Forward"><svg viewBox="0 0 14 12"><path d="M0 6h12M7 1l5 5-5 5" fill="none" stroke="#cfcfcf" stroke-width="1.500" /></svg></button>
        <button class="nav recent" aria-label="Recent locations"><svg viewBox="0 0 14 12"><path d="m4 5 3 3 3-3" fill="none" stroke="#d0d0d0" stroke-width="1.500" /></svg></button>
        <button class="nav up" aria-label="Up"><svg viewBox="0 0 14 12"><path d="M7 12V1M2 6l5-5 5 5" fill="none" stroke="#555" stroke-width="1.800" /></svg></button>
        <div class="path">
          <svg class="i16"><use href="#folder" /></svg>
          <svg class="crumb"><use href="#chev" /></svg>
          <a href="#">New folder</a>
          <span class="grow"></span>
          <button class="pathdrop" aria-label="Previous locations"><svg viewBox="0 0 10 7"><path d="m1 1 4 4 4-4" fill="none" stroke="#666" stroke-width="2" /></svg></button>
          <button class="reload" aria-label="Refresh"><svg viewBox="0 0 12 12"><path d="M4 2.500a4.300 4.300 0 1 0 5 1M2 2h3.500v3.500" fill="none" stroke="#666" stroke-width="1.500" /></svg></button>
        </div>
        <label class="find">
          <input type="search" placeholder="Search New folder" aria-label="Search New folder" />
          <svg viewBox="0 0 12 12"><circle cx="7.500" cy="4.500" r="3.500" fill="none" stroke="#666" stroke-width="1.500" /><path d="m5 7-4.500 4.500" stroke="#666" stroke-width="2" /></svg>
        </label>
      </div>

      <div class="body">
        <ul class="tree">
          <li v-for="(n, k) in tree" :key="k"><a href="#" :class="{ deep: n.depth, selected: n.selected }"><svg class="i16"><use :href="'#' + n.icon" /></svg>{{ n.label }}</a></li>
        </ul>
        <div class="bar">
          <button aria-label="Scroll up"><svg viewBox="0 0 10 6"><path d="m1 5 4-4 4 4" fill="none" stroke="#505050" stroke-width="2" /></svg></button>
          <span class="trough"></span><span class="thumb"></span>
          <button aria-label="Scroll down"><svg viewBox="0 0 10 6"><path d="m1 1 4 4 4-4" fill="none" stroke="#505050" stroke-width="2" /></svg></button>
        </div>
        <div class="files">
          <svg class="sorted" viewBox="0 0 10 6"><path d="m1 5 4-4 4 4" fill="none" stroke="#777" /></svg>
          <table>
            <thead><tr><th class="name">Name</th><th class="date">Date modified</th><th class="type">Type</th><th class="size">Size</th></tr></thead>
          </table>
          <p>This folder is empty.</p>
        </div>
      </div>

      <footer class="status">
        <span>0 items</span>
        <span class="grow"></span>
        <button class="viewmode on" aria-label="Details view"><svg viewBox="0 0 16 14"><path d="M0 0h4v3H0zM0 5h4v3H0zM0 10h4v3H0z" fill="#4f87aa" /><path d="M6 1.500h4m1 0h4M6 6.500h4m1 0h4M6 11.500h4m1 0h4" stroke="#557184" /></svg></button>
        <button class="viewmode" aria-label="Large icons view"><svg viewBox="0 0 16 14"><path d="M1.500 2.500h13v9h-13z" fill="#fff" stroke="#5f7382" /><path d="M3 4h10v6H3z" fill="url(#gSea)" /><path d="M3 7c3 0 4 1 10 1v2H3Z" fill="#3b5f6d" /></svg></button>
      </footer>
    </section>

    <div class="brand">
      <span>ANY</span>
      <svg viewBox="0 0 58 66" aria-hidden="true"><g fill="none" stroke="currentColor" stroke-width="3"><path d="M16 2v60l38-28Z" /><path d="M23 18v28l19-13Z" fill="currentColor" fill-opacity=".5" /><path d="M3 46V10l40 26" /></g></svg>
      <span>RUN</span>
    </div>

    <div class="menu main" role="menu">
      <template v-for="(m, k) in menu" :key="k">
        <hr v-if="m.line" />
        <button v-else class="entry" role="menuitem" :disabled="m.off" :class="{ open: m.open }"><span>{{ m.label }}</span><kbd v-if="m.keys">{{ m.keys }}</kbd><svg v-if="m.arrow" class="more"><use href="#chev" /></svg></button>
      </template>
    </div>
    <div class="menu sub" role="menu">
      <template v-for="(m, k) in submenu" :key="k">
        <hr v-if="m.line" />
        <button v-else class="entry" role="menuitem"><svg class="i16"><use :href="'#' + m.icon" /></svg><span>{{ m.label }}</span></button>
      </template>
    </div>

    <footer class="taskbar">
      <button class="start" aria-label="Start"><svg viewBox="0 0 16 16"><path d="m0 2 7-1v7H0zM8 1l8-1v8H8zM0 8.500h7v6.500l-7-1zM8 8.500h8V16l-8-1z" fill="#fff" /></svg></button>
      <label class="search">
        <svg class="lens" viewBox="0 0 18 18"><circle cx="11" cy="7" r="5.500" fill="none" stroke="#222" stroke-width="1.300" /><path d="m7 11-6 6" stroke="#222" stroke-width="1.300" /></svg>
        <input type="text" placeholder="Type here to search" aria-label="Type here to search" />
        <svg class="hats"><use href="#hats" /></svg>
      </label>
      <button class="task" aria-label="Task View"><svg class="view" viewBox="0 0 18 18"><path d="M1 2.500h11M1 15.500h11M2.500 5.500h9v7h-9zM1 0v3M12 0v3M1 18v-3M12 18v-3M15.500 2v14" fill="none" stroke="#f0f0f0" stroke-width="1.200" /><path d="M14 5h3v3h-3z" fill="#fff" /></svg></button>
      <button class="task" aria-label="Microsoft Edge"><svg><use href="#edgebar" /></svg></button>
      <button class="task active" aria-label="File Explorer"><svg><use href="#explorer" /></svg></button>
      <button class="task" aria-label="Firefox"><svg><use href="#firefox" /></svg></button>
      <button class="task running" aria-label="Google Chrome"><svg><use href="#chrome" /></svg></button>
      <span class="grow"></span>
      <button class="tray" aria-label="Show hidden icons"><svg viewBox="0 0 16 16"><path d="m2 11 6-6 6 6" fill="none" stroke="#fff" stroke-width="1.300" /></svg></button>
      <button class="tray" aria-label="Meet Now"><svg viewBox="0 0 16 16"><path d="M2.500 5.500h7v7h-7zM9.500 8l3-2v6l-3-2M4 2.500q4-3 8 0M4 15q4 2 8 0" fill="none" stroke="#fff" /><circle cx="6" cy="9" r="1.500" fill="#fff" /></svg></button>
      <button class="tray" aria-label="Speakers"><svg viewBox="0 0 16 16"><path d="M.5 6v4h2L6 13V3L2.500 6ZM8 6q1.500 2 0 4M10.500 4q3 4 0 8M13 2q4.500 6 0 12" fill="none" stroke="#fff" /></svg></button>
      <button class="tray" aria-label="Network"><svg viewBox="0 0 16 16"><path d="M4.500 2.500h11v8h-11zM10 11v3M6 14.500h8M.5 1.500h4v4h-4zM2.500 6v8M1 14.500h4" fill="none" stroke="#fff" /></svg></button>
      <time datetime="2026-01-14T01:12">1:12 AM<br />1/14/2026</time>
      <button class="notes" aria-label="Notifications"><svg viewBox="0 0 16 16"><path d="M.5 1.500h15v11h-5L8 15l-2.500-2.500h-5z" fill="none" stroke="#fff" /></svg></button>
      <button class="peek" aria-label="Show desktop"></button>
    </footer>
  </div>
</template>

<style>
html, body { margin: 0; height: 100%; overflow: hidden; }
</style>

<style scoped>
* { box-sizing: border-box; }
button { margin: 0; padding: 0; border: 0; background: none; color: inherit; font: inherit; cursor: default; }
a { color: inherit; text-decoration: none; }
ul { margin: 0; padding: 0; list-style: none; }
svg { flex: none; }
.sprite { position: absolute; width: 0; height: 0; }
.i16 { width: 16px; height: 16px; }
.grow { flex: 1; }
.desktop {
  position: relative;
  display: flex;
  flex-direction: column;
  justify-content: space-between;
  height: 100vh;
  overflow: hidden;
  background: linear-gradient(72deg, #00b2ff 0%, #00acff 26%, #0092f4 43%, #0072e4 59%, #0453cc 78%, #0844b8 100%);
  font: 11px/15px "Noto Sans", sans-serif;
  color: #000;
}
.shortcuts { display: grid; grid-template-rows: repeat(7, 99px); grid-auto-columns: 75px; grid-auto-flow: column; justify-content: start; }
.shortcut { display: flex; flex-direction: column; align-items: center; width: 74px; padding-top: 7px; color: #fff; text-align: center; text-shadow: 0 1px 2px #003a70; }
.art { position: relative; width: 48px; height: 48px; margin-bottom: 3px; }
.art-main { width: 48px; height: 48px; }
.art-badge { position: absolute; left: 0; bottom: 0; width: 12px; height: 12px; }

.window { position: absolute; top: 74px; right: 108px; bottom: 101px; left: 128px; display: flex; flex-direction: column; background: #fff; outline: 1px solid #36b9f3; }
.titlebar { display: flex; align-items: center; height: 31px; padding-left: 8px; }
.tick { width: 1px; height: 14px; margin: 0 10px 0 6px; background: #999; }
.tick.second { margin: 0 7px 0 8px; }
.quick { height: 16px; margin-right: 6px; }
.quick.narrow { display: flex; align-items: center; margin: 0; }
.qcaret { width: 8px; height: 8px; }
h1 { flex: 1; margin: 0; font-size: 11px; font-weight: 400; }
.controls { display: flex; height: 100%; padding-right: 1px; }
.controls button { display: grid; place-items: center; width: 46px; }
.controls svg { width: 11px; height: 11px; }
.tabs { display: flex; align-items: center; height: 24px; padding-right: 4px; border-bottom: 1px solid #dadbdc; }
.tab { width: 56px; height: 24px; color: #333; }
.tab.file { background: #0063b1; color: #fff; }
.tab.active { width: 58px; margin-right: 1px; border: 1px solid #dadbdc; border-bottom: 0; background: #f5f6f7; }
.mini { display: grid; place-items: center; width: 18px; height: 18px; margin-right: 5px; }
.mini svg { width: 10px; height: 6px; }
.help { width: 16px; height: 16px; border-radius: 50%; background: #0a63c4; color: #fff; font-weight: 700; line-height: 16px; }

.ribbon { display: flex; height: 92px; padding: 3px 0 2px; border-bottom: 1px solid #d5d6d7; background: linear-gradient(#f4f7fb, #f5f5f5); }
.group { display: flex; flex-direction: column; padding-right: 6px; border-right: 1px solid #e1e3e5; }
.group.clip { width: 263px; padding-left: 6px; }
.group.organize { width: 191px; padding-left: 3px; }
.group.create { width: 145px; padding-left: 3px; }
.group.opening { width: 133px; padding-left: 6px; }
.group.select { width: 115px; padding-left: 7px; }
.tools { display: flex; flex: 1; min-height: 0; }
.tools > * { flex: none; }
h2 { margin: 0; color: #555; font-size: 11px; font-weight: 400; text-align: center; line-height: 15px; }
.big { display: flex; flex-direction: column; align-items: center; gap: 3px; padding-top: 4px; line-height: 13px; color: #222; }
.big > svg { width: 32px; height: 32px; }
.off { color: #787878; }
.big.pin { width: 66px; }
.big.copy, .big.paste { width: 42px; }
.big.move { width: 42px; padding-right: 3px; padding-left: 3px; }
.big.del { width: 42px; }
.big.ren { width: 48px; }
.big.prop { width: 52px; }
.down { display: inline-block; width: 0; height: 0; border: 3px solid transparent; border-top-color: currentColor; border-bottom: 0; vertical-align: middle; }
.off .down { opacity: .5; }
.split { width: 1px; height: 56px; margin: 4px 3px 0 5px; background: #dcdee0; }
.stack { display: flex; flex-direction: column; padding-left: 4px; }
.small { display: flex; align-items: center; gap: 3px; height: 22px; white-space: nowrap; }
.small .down { margin-left: 2px; }
.select .stack { padding-left: 0; }

.address { display: flex; align-items: center; height: 34px; padding: 0 13px 0 5px; }
.nav { display: grid; place-items: center; width: 29px; height: 22px; }
.nav svg { width: 14px; height: 12px; }
.nav.recent { width: 18px; }
.nav.up { width: 25px; }
.path { display: flex; flex: 1; align-items: center; height: 22px; padding: 0 0 1px 2px; border: 1px solid #d9d9d9; }
.crumb { width: 5px; height: 8px; margin: 0 9px 0 7px; color: #444; }
.pathdrop, .reload { display: grid; place-items: center; width: 17px; height: 20px; }
.reload { border-left: 1px solid #d9d9d9; }
.pathdrop svg { width: 10px; height: 7px; }
.reload svg { width: 12px; height: 12px; }
.find { display: flex; align-items: center; width: 202px; height: 22px; margin-left: 12px; padding: 0 8px 1px; border: 1px solid #d9d9d9; }
.find input { flex: 1; min-width: 0; padding: 0; border: 0; outline: 0; background: none; font: inherit; }
.find svg { width: 12px; height: 12px; }
input::placeholder { color: #6d6d6d; opacity: 1; }

.body { display: flex; flex: 1; min-height: 0; }
.tree { width: 139px; padding-top: 1px; overflow: hidden; }
.tree a { display: flex; align-items: center; gap: 5px; height: 24px; padding: 0 0 1px 32px; white-space: nowrap; }
.tree a.deep { padding-left: 40px; }
.tree a.selected { background: #d9d9d9; }
.bar { display: flex; flex-direction: column; width: 17px; padding: 0 1px; background: #f0f0f0; }
.bar button { display: grid; place-items: center; height: 18px; }
.bar svg { width: 10px; height: 6px; }
.trough { flex: 234; }
.thumb { flex: 117; background: #cdcdcd; }
.files { position: relative; flex: 1; padding-top: 1px; border-left: 1px solid #f0f0f0; }
.sorted { position: absolute; top: 1px; left: 140px; width: 10px; height: 6px; }
table { border-collapse: collapse; margin-left: 14px; }
th { height: 26px; padding: 0 6px 1px; border-right: 1px solid #e5e5e5; color: #4c607a; font-weight: 400; text-align: left; }
.name { width: 261px; }
.date { width: 140px; }
.type { width: 123px; }
.size { width: 80px; }
.files p { margin: 14px 0 0; color: #6d6d6d; text-align: center; }
.status { display: flex; align-items: center; height: 25px; padding: 0 5px 0 14px; color: #1e395b; }
.viewmode { display: grid; place-items: center; width: 22px; height: 22px; }
.viewmode.on { border: 1px solid #29a4d8; background: #cce8f6; }
.viewmode svg { width: 16px; height: 14px; }

.brand { position: absolute; right: 50px; bottom: 46px; display: flex; align-items: center; gap: 3px; color: #c3d2e6; font: 300 32px/66px Roboto, sans-serif; opacity: .65; }
.brand svg { width: 58px; height: 66px; }

.menu { position: absolute; padding: 4px 2px; border: 1px solid #a0a0a0; background: #eee; box-shadow: 2px 2px 3px #0003; }
.menu.main { top: 161px; left: 548px; width: 234px; }
.menu.sub { top: 389px; left: 776px; width: 297px; }
.menu hr { height: 1px; margin: 3px 8px; border: 0; background: #919191; }
.entry { display: flex; align-items: center; width: 100%; height: 22px; padding: 0 7px 2px 32px; text-align: left; }
.entry span { flex: 1; }
.entry:disabled { color: #6d6d6d; }
.entry.open { background: #fff; }
.entry kbd { margin-right: 10px; font: inherit; }
.sub .entry { gap: 8px; padding-left: 8px; }
.more { width: 9px; height: 14px; color: #222; }

.taskbar { display: flex; align-items: center; height: 40px; background: #01141f; color: #fff; }
.taskbar > button { display: grid; place-items: center; height: 40px; }
.start { width: 48px; }
.start svg { width: 16px; height: 16px; }
.search { display: flex; align-items: center; width: 288px; height: 40px; margin-right: 2px; padding: 0 4px 0 12px; background: #f2f2f2; }
.lens { width: 17px; height: 17px; margin-right: 11px; }
.search input { flex: 1; min-width: 0; padding: 0; border: 0; outline: 0; background: none; font: 14px/20px "Noto Sans", sans-serif; }
.search input::placeholder { color: #333; }
.hats { width: 72px; height: 36px; }
.task { width: 48px; margin-right: 1px; border-bottom: 2px solid transparent; }
.task svg { width: 24px; height: 24px; }
.task .view { width: 18px; height: 18px; }
.task.active { border-color: #76b9ed; background: #33454f; }
.task.running { border-color: #76b9ed; }
.tray { width: 24px; }
.tray svg, .notes svg { width: 16px; height: 16px; }
.taskbar time { width: 64px; line-height: 18px; text-align: center; }
.notes { width: 40px; }
.taskbar > .peek { width: 5px; margin-left: 8px; border-left: 1px solid #3c4c55; }
</style>
